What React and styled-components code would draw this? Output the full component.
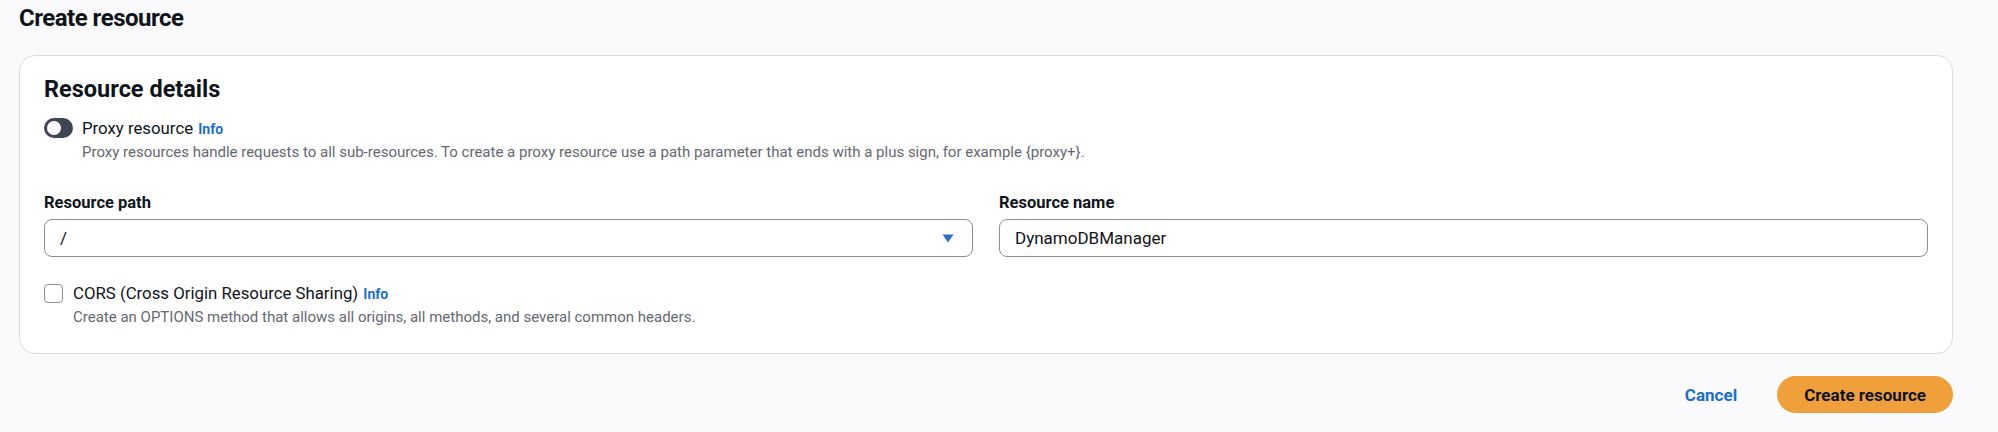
import React from "react";
import styled, { createGlobalStyle } from "styled-components";

const GlobalStyle = createGlobalStyle`
  html, body {
    margin: 0;
    padding: 0;
    background: #fafafc;
    font-family: Roboto, "Liberation Sans", Arial, sans-serif;
    color: #0f141a;
  }
`;

function App() {
  return (
    <Page>
      <GlobalStyle />
      <Title>Create resource</Title>

      <Card>
        <CardTitle>Resource details</CardTitle>

        <OptionRow>
          <Toggle>
            <Knob />
          </Toggle>
          <OptionText>
            <OptionLabel>
              Proxy resource <Info>Info</Info>
            </OptionLabel>
            <Hint>
              Proxy resources handle requests to all sub-resources. To create a
              proxy resource use a path parameter that ends with a plus sign,
              for example {"{proxy+}"}.
            </Hint>
          </OptionText>
        </OptionRow>

        <Fields>
          <Field>
            <Label>Resource path</Label>
            <Select>
              <span>/</span>
              <svg width="12" height="9" viewBox="0 0 12 9">
                <path d="M0.5 0.5 L11.5 0.5 L6 8.5 Z" fill="#2a6fd6" />
              </svg>
            </Select>
          </Field>
          <Field>
            <Label>Resource name</Label>
            <Input>DynamoDBManager</Input>
          </Field>
        </Fields>

        <OptionRow $check>
          <Checkbox />
          <OptionText>
            <OptionLabel>
              CORS (Cross Origin Resource Sharing) <Info>Info</Info>
            </OptionLabel>
            <Hint>
              Create an OPTIONS method that allows all origins, all methods, and
              several common headers.
            </Hint>
          </OptionText>
        </OptionRow>
      </Card>

      <Actions>
        <LinkButton>Cancel</LinkButton>
        <PrimaryButton>Create resource</PrimaryButton>
      </Actions>
    </Page>
  );
}

export default App;

const Page = styled.div`
  padding: 0 45px 0 19px;
`;

const Title = styled.h1`
  margin: 0;
  font-size: 24px;
  line-height: 36px;
  font-weight: 700;
  letter-spacing: -0.5px;
`;

const Card = styled.div`
  margin-top: 19px;
  background: #ffffff;
  border: 1px solid #dcdce1;
  border-radius: 16px;
  padding: 18px 24px 26px;
`;

const CardTitle = styled.h2`
  margin: 0;
  font-size: 23.5px;
  line-height: 30px;
  font-weight: 700;
`;

const OptionRow = styled.div`
  display: flex;
  align-items: flex-start;
  gap: ${(p) => (p.$check ? "10px" : "9px")};
  margin-top: ${(p) => (p.$check ? "25px" : "13px")};
`;

const Toggle = styled.div`
  flex: none;
  width: 29px;
  height: 20px;
  margin-top: 1px;
  border-radius: 10px;
  background: #3f4652;
  display: flex;
  align-items: center;
  padding-left: 3px;
  box-sizing: border-box;
`;

const Knob = styled.div`
  width: 14px;
  height: 14px;
  border-radius: 50%;
  background: #ffffff;
`;

const Checkbox = styled.div`
  flex: none;
  width: 19px;
  height: 19px;
  margin-top: 2px;
  box-sizing: border-box;
  border: 1.5px solid #8c8c94;
  border-radius: 4px;
  background: #ffffff;
`;

const OptionText = styled.div`
  display: flex;
  flex-direction: column;
  gap: 3px;
`;

const OptionLabel = styled.div`
  font-size: 16.8px;
  line-height: 22px;
`;

const Info = styled.span`
  color: #1a6fd1;
  font-weight: 700;
  font-size: 14px;
  margin-left: 1px;
`;

const Hint = styled.div`
  font-size: 15px;
  line-height: 19px;
  color: #656871;
`;

const Fields = styled.div`
  display: grid;
  grid-template-columns: 1fr 1fr;
  column-gap: 26px;
  margin-top: 30px;
`;

const Field = styled.div`
  display: flex;
  flex-direction: column;
  gap: 5px;
`;

const Label = styled.div`
  font-size: 16.5px;
  line-height: 22px;
  font-weight: 700;
`;

const Select = styled.div`
  height: 38px;
  box-sizing: border-box;
  border: 1px solid #8c8c94;
  border-radius: 8px;
  display: flex;
  align-items: center;
  justify-content: space-between;
  padding: 0 18px 0 15px;
  font-size: 17px;

  svg {
    display: block;
  }
`;

const Input = styled.div`
  height: 38px;
  box-sizing: border-box;
  border: 1px solid #8c8c94;
  border-radius: 8px;
  display: flex;
  align-items: center;
  padding: 0 15px;
  font-size: 17px;
`;

const Actions = styled.div`
  display: flex;
  justify-content: flex-end;
  align-items: center;
  gap: 40px;
  margin-top: 22px;
`;

const LinkButton = styled.button`
  border: none;
  background: none;
  padding: 0;
  font-family: inherit;
  font-size: 17px;
  font-weight: 700;
  color: #1a6fd1;
  cursor: pointer;
`;

const PrimaryButton = styled.button`
  height: 37px;
  padding: 0 27px;
  border: none;
  border-radius: 19px;
  background: #f0a03a;
  font-family: inherit;
  font-size: 17px;
  font-weight: 700;
  color: #0f141a;
  cursor: pointer;
`;
